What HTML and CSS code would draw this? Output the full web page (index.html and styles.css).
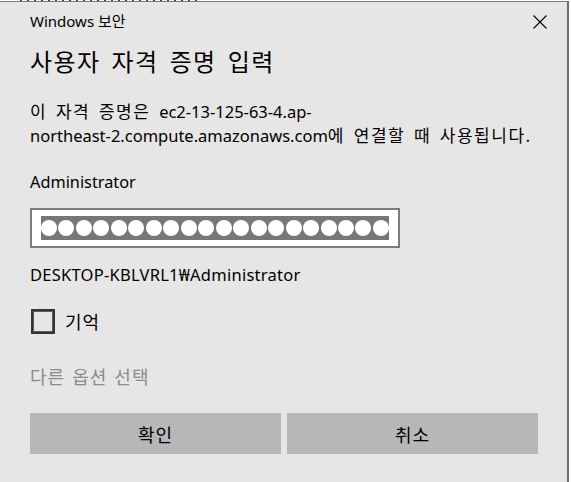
FILE: index.html
```html
<!DOCTYPE html>
<html lang="ko">
<head>
<meta charset="utf-8">
<title>Windows 보안</title>
<link rel="stylesheet" href="styles.css">
</head>
<body>
<div class="backdrop-strip"></div>
<div class="dialog">
  <div class="header">
    <span class="app-name">Windows 보안</span>
    <svg class="close" width="14" height="14" viewBox="0 0 14 14" aria-label="닫기">
      <path d="M0.5 0.5 L13.5 13.5 M13.5 0.5 L0.5 13.5" stroke="#000" stroke-width="1.1" fill="none"/>
    </svg>
  </div>
  <h1 class="title">사용자 자격 증명 입력</h1>
  <p class="desc"><span class="ko">이 자격 증명은 </span>ec2-13-125-63-4.ap-<br>northeast-2.compute.amazonaws.com<span class="ko">에 연결할 때 사용됩니다.</span></p>
  <div class="user">Administrator</div>
  <div class="password">
    <div class="selection">
      <span class="dot"></span><span class="dot"></span><span class="dot"></span><span class="dot"></span><span class="dot"></span>
      <span class="dot"></span><span class="dot"></span><span class="dot"></span><span class="dot"></span><span class="dot"></span>
      <span class="dot"></span><span class="dot"></span><span class="dot"></span><span class="dot"></span><span class="dot"></span>
      <span class="dot"></span><span class="dot"></span><span class="dot"></span><span class="dot"></span><span class="dot"></span>
    </div>
  </div>
  <div class="domain">DESKTOP-KBLVRL1₩Administrator</div>
  <label class="remember"><span class="checkbox"></span><span class="remember-text">기억</span></label>
  <div class="more">다른 옵션 선택</div>
  <div class="buttons">
    <div class="btn">확인</div>
    <div class="btn">취소</div>
  </div>
</div>
</body>
</html>
```

FILE: styles.css
```css
html, body {
  margin: 0;
  padding: 0;
  background: #ffffff;
  height: 100%;
  overflow: hidden;
}

body {
  font-family: "Noto Sans", "Noto Sans CJK KR", sans-serif;
  color: #000;
}

.backdrop-strip {
  height: 1px;
  width: 180px;
  margin-left: 20px;
  background: repeating-linear-gradient(90deg, #444 0 2px, transparent 2px 7px);
}

.dialog {
  width: 508px;
  height: 471px;
  background: #e6e6e6;
  border-top: 1px solid #7a7a7a;
  border-right: 2px solid #6e6e6e;
  padding: 9px 29px 0 30px;
  display: flex;
  flex-direction: column;
}

.header {
  display: flex;
  justify-content: space-between;
  align-items: center;
  height: 20px;
  flex: none;
}

.app-name {
  font-size: 15px;
  line-height: 20px;
}

.close {
  margin-right: -9px;
  margin-top: 2px;
}

.title {
  margin: 14px 0 0 0;
  font-family: "Noto Sans CJK KR", sans-serif;
  font-weight: 400;
  font-size: 24px;
  line-height: 32px;
  letter-spacing: 1.4px;
  word-spacing: 3px;
}

.desc {
  margin: 23px 0 0 0;
  font-size: 16.5px;
  line-height: 24px;
  height: 48px;
  white-space: nowrap;
}

.ko {
  font-family: "Noto Sans CJK KR", sans-serif;
  font-size: 17px;
  line-height: 1;
  letter-spacing: 1.5px;
  word-spacing: 2.5px;
}

.user {
  margin-top: 22px;
  font-size: 16.3px;
  line-height: 24px;
}

.password {
  margin-top: 14px;
  width: 366px;
  height: 36px;
  border: 2px solid #7d7d7d;
  background: #ffffff;
  display: flex;
  align-items: center;
  flex: none;
}

.selection {
  margin-left: 9px;
  height: 24px;
  width: 348px;
  background: #777777;
  display: flex;
  align-items: center;
  gap: 1.47px;
}

.dot {
  width: 16px;
  height: 16px;
  border-radius: 50%;
  background: #ffffff;
  flex: none;
}

.domain {
  margin-top: 15px;
  font-size: 16.5px;
  line-height: 24px;
  letter-spacing: 0.25px;
}

.remember {
  margin-top: 22px;
  display: flex;
  align-items: center;
  height: 25px;
  flex: none;
}

.checkbox {
  width: 20px;
  height: 21px;
  border: 2px solid #333333;
  margin-left: 1px;
  box-shadow: inset 0 0 0 1px #5a5a5a;
}

.remember-text {
  margin-left: 10px;
  font-family: "Noto Sans CJK KR", sans-serif;
  font-size: 18px;
  line-height: 25px;
  letter-spacing: 1px;
}

.more {
  margin-top: 29px;
  font-family: "Noto Sans CJK KR", sans-serif;
  font-size: 18px;
  line-height: 26px;
  letter-spacing: 1px;
  word-spacing: 1px;
  color: #8a8a8a;
}

.buttons {
  margin-top: 24px;
  display: grid;
  grid-template-columns: 1fr 1fr;
  gap: 6px;
}

.btn {
  height: 41px;
  background: #b7b7b7;
  display: flex;
  align-items: center;
  justify-content: center;
  font-family: "Noto Sans CJK KR", sans-serif;
  font-size: 18px;
  letter-spacing: 1px;
}
```
